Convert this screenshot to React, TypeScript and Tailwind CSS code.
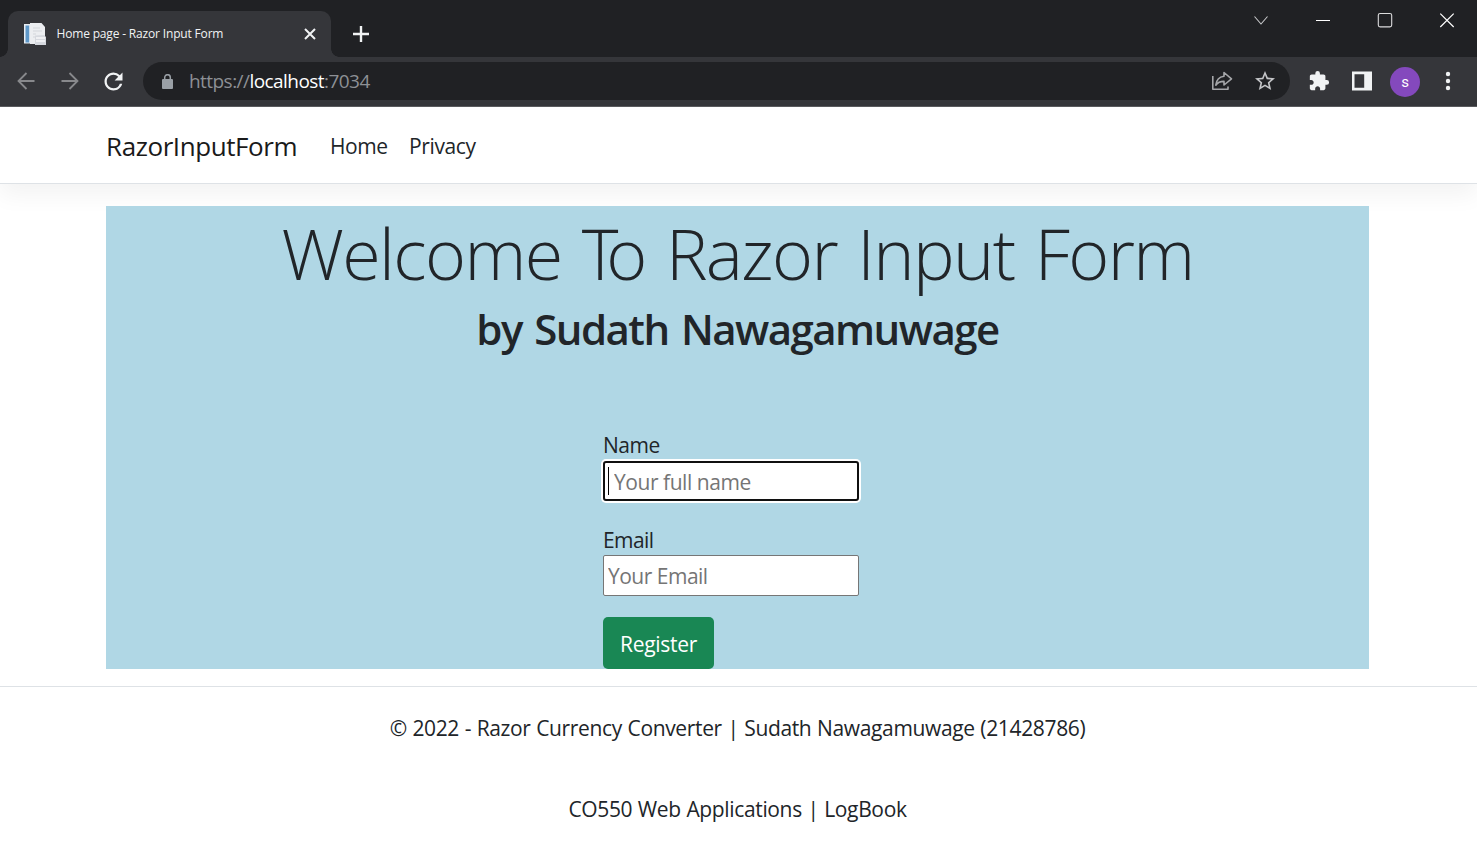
import React from "react";
import { MdExtension, MdRefresh, MdStarBorder } from "react-icons/md";

function PageIcon() {
  return (
    <svg width="22" height="22" viewBox="0 0 22 22" className="block">
      <path d="M0 1h6v19.500H0z" fill="#e9eef3" />
      <path d="M1.500 2.500h3.700v17H1.500z" fill="#5f98c8" />
      <path d="M6 0h11.500l3.500 4v17H6z" fill="#eceef1" />
      <path d="M9 5h7M9 8h9M9 11h3M9 14h2" stroke="#d3d6db" strokeWidth="1" />
      <path d="M11 12.500l9-.5 2 2v8H11z" fill="#d6d9df" />
      <path d="M12 15h9M12 18h9" stroke="#f8f8fa" strokeWidth="1.300" />
    </svg>
  );
}

function Arrow({ flip }: { flip?: boolean }) {
  return (
    <svg width="18" height="18" viewBox="0 0 18 18" className={flip ? "block rotate-180" : "block"} fill="none" stroke="#88898c" strokeWidth="1.800">
      <path d="M17.500 9H1.500M9.500 1L1.500 9l8 8" />
    </svg>
  );
}

function BrowserChrome() {
  return (
    <div className="bg-[#202124]">
      <div className="flex h-[57px] items-stretch">
        <div className="flex w-2 items-end bg-[#202124]">
          <div className="h-2 w-2 bg-[radial-gradient(circle_at_0_0,#202124_7.5px,#35363a_8px)]" />
        </div>
        <div className="mt-[11px] flex w-[323px] items-center rounded-t-[10px] bg-[#35363a] pl-4">
          <PageIcon />
          <span className="ml-[10.5px] w-[247px] whitespace-nowrap text-[12px] tracking-[-0.17px] text-[#f1f3f4]">
            Home page - Razor Input Form
          </span>
          <svg width="12" height="12" viewBox="0 0 12 12" className="block" fill="none" stroke="#f1f3f4" strokeWidth="2">
            <path d="M1 1l10 10M11 1L1 11" />
          </svg>
        </div>
        <div className="flex w-2 items-end">
          <div className="h-2 w-2 bg-[radial-gradient(circle_at_100%_0,#202124_7.5px,#35363a_8px)]" />
        </div>
        <svg width="16" height="16" viewBox="0 0 16 16" className="ml-[14px] mt-[26px] block" fill="none" stroke="#f1f3f4" strokeWidth="2.400">
          <path d="M8 0v16M0 8h16" />
        </svg>
        <div className="ml-auto flex gap-[48px] pr-[23px] pt-[13px]">
          <svg width="14" height="14" viewBox="0 0 14 14" fill="none" stroke="#c8c9cb" strokeWidth="1.100">
            <path d="M.5 3.500L7 11l6.500-7.500" />
          </svg>
          <svg width="14" height="14" viewBox="0 0 14 14" fill="none" stroke="#ffffff" strokeWidth="1">
            <path d="M0 7.500h14" />
          </svg>
          <svg width="14" height="14" viewBox="0 0 14 14" className="overflow-visible" fill="none" stroke="#dcdcdd" strokeWidth="1.100">
            <rect x=".3" y=".5" width="13.400" height="13.400" rx="1.800" />
          </svg>
          <svg width="14" height="14" viewBox="0 0 14 14" className="overflow-visible" fill="none" stroke="#ffffff" strokeWidth="1.200">
            <path d="M.3.600l13.400 13.400M13.700.600L.3 14" />
          </svg>
        </div>
      </div>
      <div className="flex h-[50px] items-center border-b border-[#5a5b5e] bg-[#35363a] pb-px pl-[17px]">
        <Arrow />
        <div className="ml-[26px]">
          <Arrow flip />
        </div>
        <MdRefresh className="ml-[21px] text-[#f1f3f4]" size={27} />
        <div className="ml-[16px] flex h-[38px] w-[1147px] items-center rounded-full bg-[#202124] pl-[19px]">
          <svg width="11" height="15" viewBox="0 0 11 15" className="block">
            <rect y="5" width="11" height="10" rx="1" fill="#9aa0a6" />
            <path d="M2.700 6V3.500a2.800 2.800 0 0 1 5.600 0V6" fill="none" stroke="#9aa0a6" strokeWidth="1.500" />
          </svg>
          <span className="ml-[16px] whitespace-nowrap text-[19px] tracking-[-0.55px] text-[#8d9095]">
            https://<span className="text-white">localhost</span>:7034
          </span>
          <svg width="22" height="20" viewBox="0 0 22 20" className="ml-auto block" fill="none" stroke="#a5a6a9" strokeWidth="1.600" strokeLinejoin="round">
            <path d="M1.800 5v13.200H17V15.500" />
            <path d="M13 1.500l7.500 6.300-7.500 6.200v-3.600c-3.500 0-6.200.8-8.200 3.800.5-5 3.200-8.300 8.200-9z" />
          </svg>
          <MdStarBorder className="ml-[20px] mr-[13px] text-[#c4c5c8]" size={24} />
        </div>
        <MdExtension className="ml-[18px] text-[#f1f3f4]" size={22} />
        <svg width="20" height="20" viewBox="0 0 20 20" className="ml-[22px] block">
          <path d="M0 .5h20v19H0zM2.500 3.300v13.400h9.700V3.300z" fill="#f1f3f4" fillRule="evenodd" />
        </svg>
        <div className="ml-[18px] mt-px flex h-[30px] w-[30px] items-center justify-center rounded-full bg-[#8449bd] font-[Roboto] text-[15px] text-white">
          s
        </div>
        <svg width="6" height="20" viewBox="0 0 6 20" className="ml-[25px] block" fill="#f1f3f4">
          <circle cx="3" cy="3" r="2.200" />
          <circle cx="3" cy="10" r="2.200" />
          <circle cx="3" cy="17" r="2.200" />
        </svg>
      </div>
    </div>
  );
}

export default function App() {
  return (
    <div className="flex h-[842px] w-[1477px] flex-col overflow-hidden bg-white font-['Open_Sans','Noto_Sans',sans-serif] text-[21px] leading-[32px] text-[#212529]">
      <BrowserChrome />
      <header className="h-[77px] border-b border-[#dee2e6] shadow-[0_11px_22px_rgba(0,0,0,0.05)]">
        <nav className="flex h-[78px] items-center whitespace-nowrap pl-[106px]">
          <a className="w-[224px] text-[26px] tracking-[-0.42px] text-[#1a1a1a]">RazorInputForm</a>
          <a className="w-[79px] tracking-[-0.42px]">Home</a>
          <a className="tracking-[-0.38px]">Privacy</a>
        </nav>
      </header>
      <main className="ml-[106px] mt-[22px] flex h-[463px] w-[1263px] flex-col bg-[#b0d7e5]">
        <h1 className="mt-[4px] h-[88px] whitespace-nowrap text-center text-[70px] font-light leading-[86px] tracking-[-1.6px] [word-spacing:3.5px]">
          Welcome <span className="tracking-[-12px]">T</span>o Razor Input Form
        </h1>
        <h2 className="h-[64px] whitespace-nowrap text-center text-[42px] font-semibold leading-[62px] tracking-[-1.55px] [word-spacing:3px]">
          by Sudath Nawagamuwage
        </h2>
        <form className="ml-[497px] mt-[67px] flex w-[256px] flex-col">
          <label className="h-[32px] tracking-[-0.5px]">Name</label>
          <div className="relative h-[40px]">
            <input
              placeholder="Your full name"
              className="h-[40px] w-[256px] rounded-[3px] border-2 border-[#101010] bg-white pl-[9px] pt-[2px] tracking-[-0.45px] shadow-[0_0_0_2px_#ffffff] outline-none placeholder:text-[#757575]"
            />
            <span className="absolute left-[5px] top-[6px] h-[28px] w-px bg-black" />
          </div>
          <label className="mt-[23px] h-[31px] tracking-[-0.6px]">Email</label>
          <input
            placeholder="Your Email"
            className="h-[41px] w-[256px] rounded-[2px] border border-[#767676] bg-white pl-[4px] tracking-[-0.5px] outline-none placeholder:text-[#757575]"
          />
          <button type="button" className="mt-[21px] h-[52px] w-[111px] rounded-[5px] bg-[#198754] pt-[2px] tracking-[-0.3px] text-white">
            Register
          </button>
        </form>
      </main>
      <footer className="mt-[17px] flex flex-col items-center whitespace-nowrap border-t border-[#dee2e6] pr-[2px] pt-[25px] tracking-[-0.35px] [word-spacing:0.5px]">
        <p>© 2022 - Razor Currency Converter | Sudath Nawagamuwage (21428786)</p>
        <p className="mt-[49px]">CO550 Web Applications | LogBook</p>
      </footer>
    </div>
  );
}
